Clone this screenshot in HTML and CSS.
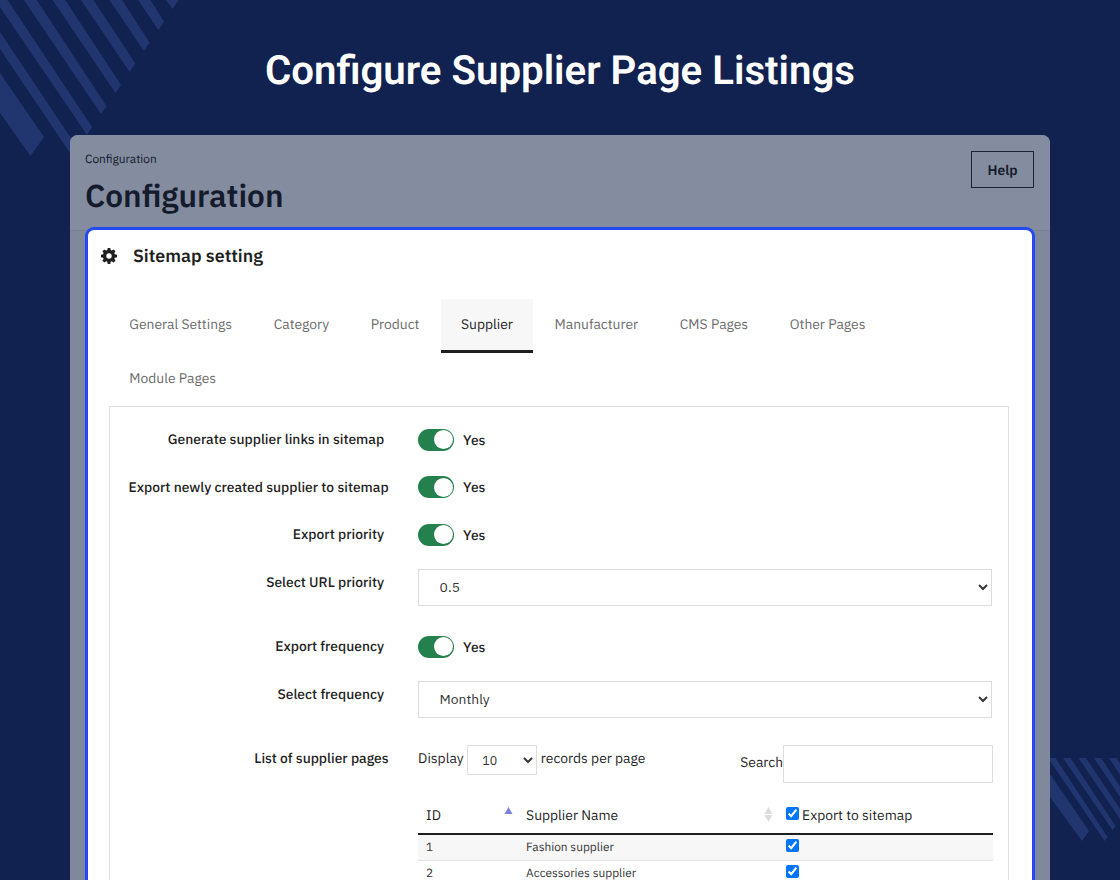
FILE: index.html
```html
<!DOCTYPE html>
<html lang="en">
<head>
<meta charset="utf-8">
<title>Configure Supplier Page Listings</title>
<link rel="stylesheet" href="styles.css">
</head>
<body>
<div class="stage">
    <svg class="stripes" width="1120" height="880" viewBox="0 0 1120 880">
        <!-- top left -->
        <path d="M0 73L44 137L30.5 156L0 113Z"/>
        <path d="M0 32L77 147L72 156L0 49Z"/>
        <path d="M0 0H7.5L92 127L87 135L0 7Z"/>
        <path d="M24 0H36.7L106.5 106L101 114Z"/>
        <path d="M52.5 0H65.3L121 85L115.5 93Z"/>
        <path d="M81 0H93.5L135.3 63.5L129.6 72Z"/>
        <path d="M109.5 0H122L149.6 42.5L144 51Z"/>
        <path d="M138 0H150.5L164 21.5L158.4 30Z"/>
        <path d="M166 0H178.7L172.6 9Z"/>
        <!-- bottom right -->
        <path d="M1050 774L1089 831L1082 841L1050 797Z"/>
        <path d="M1048 758H1055.5L1107.5 837L1104.7 841Z"/>
        <path d="M1063 758H1070.5L1115.5 826L1112.5 830Z"/>
        <path d="M1078.5 758H1086L1120 809V819Z"/>
        <path d="M1094 758H1101L1120 786.5V797Z"/>
        <path d="M1109 758H1116.5L1120 763.5V774.5Z"/>
    </svg>

    <h1 class="title">Configure Supplier Page Listings</h1>

    <div class="panel">
        <div class="panel_head">
            <div>
                <div class="crumb">Configuration</div>
                <h2 class="page_name">Configuration</h2>
            </div>
            <a class="help" href="javascript:;">Help</a>
        </div>

        <div class="card">
            <div class="card_head">
                <svg class="cog" width="16" height="16" viewBox="0 0 16 16">
                    <path fill-rule="evenodd" d="M6.7 0h2.6l.4 2.1 1.1.5L12.6 1.4 14.5 3.3 13.3 5.1l.5 1.2L16 6.7v2.6l-2.2.4-.5 1.1 1.2 1.9-1.9 1.8-1.8-1.2-1.1.5L9.3 16H6.7l-.4-2.2-1.2-.5-1.8 1.2-1.9-1.8 1.2-1.9-.5-1.1L0 9.3V6.7l2.1-.4.5-1.2L1.4 3.3 3.3 1.4l1.8 1.2 1.2-.5ZM8 5.3a2.7 2.7 0 1 0 0 5.4 2.7 2.7 0 0 0 0-5.4Z"/>
                </svg>
                <h3>Sitemap setting</h3>
            </div>

            <ul class="tabs">
                <li>General Settings</li>
                <li>Category</li>
                <li>Product</li>
                <li class="active">Supplier</li>
                <li>Manufacturer</li>
                <li>CMS Pages</li>
                <li>Other Pages</li>
                <li>Module Pages</li>
            </ul>

            <div class="tab_box">
                <div class="row">
                    <label class="name">Generate supplier links in sitemap</label>
                    <div class="switch"><i></i>Yes</div>
                </div>
                <div class="row">
                    <label class="name wide">Export newly created supplier to sitemap</label>
                    <div class="switch"><i></i>Yes</div>
                </div>
                <div class="row">
                    <label class="name">Export priority</label>
                    <div class="switch"><i></i>Yes</div>
                </div>
                <div class="row row_select">
                    <label class="name">Select URL priority</label>
                    <select class="field"><option>0.5</option></select>
                </div>
                <div class="row">
                    <label class="name">Export frequency</label>
                    <div class="switch"><i></i>Yes</div>
                </div>
                <div class="row row_select">
                    <label class="name">Select frequency</label>
                    <select class="field"><option>Monthly</option></select>
                </div>
                <div class="row">
                    <label class="name wide">List of supplier pages</label>
                    <div class="list">
                        <div class="list_bar">
                            <div class="display">
                                <span>Display</span>
                                <select class="count"><option>10</option></select>
                                <span>records per page</span>
                            </div>
                            <div class="search">Search<input type="text"></div>
                        </div>
                        <table>
                            <thead>
                                <tr>
                                    <th class="c_id"><div>ID<svg width="9" height="7" viewBox="0 0 9 7"><path fill="#8080e0" d="M4.5 0L8.5 7H.5Z"/></svg></div></th>
                                    <th class="c_name"><div>Supplier Name<svg class="both" width="9" height="15" viewBox="0 0 9 15"><path fill="#dcdcdc" d="M4.5 0L8.5 7H.5ZM.5 8H8.5L4.5 15Z"/></svg></div></th>
                                    <th class="c_check"><input type="checkbox" checked>Export to sitemap</th>
                                </tr>
                            </thead>
                            <tbody>
                                <tr><td>1</td><td>Fashion supplier</td><td class="c_check"><input type="checkbox" checked></td></tr>
                                <tr><td>2</td><td>Accessories supplier</td><td class="c_check"><input type="checkbox" checked></td></tr>
                            </tbody>
                        </table>
                    </div>
                </div>
            </div>
        </div>
    </div>
</div>
</body>
</html>
```
FILE: styles.css
```css
* { box-sizing: border-box; }
body { margin: 0; background: #112150; font: 13.85px/20px "IBM Plex Sans", Roboto, "Noto Sans", sans-serif; color: #1f1f1f; text-rendering: geometricPrecision; }
h1, h2, h3, ul { margin: 0; padding: 0; }
li { list-style: none; }

.stage { position: relative; width: 1120px; height: 880px; overflow: hidden; }
.stripes { position: absolute; left: 0; top: 0; fill: #21366f; }
.title { position: relative; height: 135px; padding-top: 47px; text-align: center; font: 600 40.2px/48px Roboto, sans-serif; color: #fff; }

.panel { position: relative; width: 980px; height: 760px; margin: 0 auto; border-radius: 8px 8px 0 0; background: #80889b; }
.panel_head { display: flex; justify-content: space-between; align-items: flex-start; height: 96px; padding: 16px 16px 0 15px; border-bottom: 1px solid #767e90; border-radius: 8px 8px 0 0; background: #848c9f; color: #141b2d; }
.crumb { font-size: 11.9px; line-height: 18px; }
.page_name { margin-top: 6px; font-size: 31.6px; line-height: 42px; font-weight: 600; }
.help { width: 63px; height: 37px; border: 1px solid #1b2336; line-height: 36px; text-align: center; font-weight: 600; color: #141b2d; text-decoration: none; }

.card { position: relative; width: 950.5px; height: 680px; margin: -4px 0 0 14.5px; padding: 0 22px; border: 3px solid #2249f2; border-radius: 9px; background: #fff; }
.card_head { display: flex; align-items: center; height: 52px; margin-left: -8.5px; gap: 16px; }
.card_head h3 { font-size: 17.8px; font-weight: 600; }
.cog { fill: #1f1f1f; }

.tabs { display: flex; flex-wrap: wrap; column-gap: 2px; width: 860px; margin-top: 17px; color: #6c6c6c; }
.tabs li { height: 53.5px; padding: 0 19.8px; line-height: 50.6px; }
.tabs .active { height: 54px; margin-bottom: -1px; background: #f7f7f7; border-bottom: 3px solid #1f1f1f; color: #1f1f1f; }

.tab_box { width: 900px; height: 600px; margin-left: -.4px; padding: 20px 16px 0 0; border: 1px solid #e0e0e0; }
.row { display: flex; height: 47.5px; }
.row_select { height: 64.5px; }
.name { width: 274px; margin-right: 34px; flex: none; line-height: 24px; text-align: right; white-space: nowrap; font-weight: 500; }
.name.wide { width: 278.5px; margin-right: 29.5px; }
.switch { display: flex; align-items: center; gap: 9px; height: 25.5px; font-weight: 500; }
.switch i { width: 36px; height: 22px; padding: 1.5px 1px; border-radius: 11px; background: #24804c; }
.switch i:after { content: ""; display: block; width: 19px; height: 19px; margin-left: auto; border-radius: 50%; background: #fff; }
.field { flex: 1; height: 37px; margin-top: -1px; padding: 0 0 0 16.5px; border: 1px solid #ddd; border-radius: 0; background: #fff; font: inherit; color: #363636; }

.list { flex: 1; margin-top: -1px; }
.list_bar { display: flex; justify-content: space-between; height: 54px; }
.display { display: flex; gap: 3.6px; height: 30px; line-height: 27px; }
.count { width: 70px; height: 30px; padding-left: 10px; border: 1px solid #ddd; border-radius: 0; background: #fff; font: 12.4px "IBM Plex Sans", sans-serif; color: #363636; }
.search { display: flex; height: 38px; line-height: 35px; }
.search input { width: 210px; height: 38px; border: 1px solid #ddd; }

table { width: 575px; border-collapse: separate; border-spacing: 0; table-layout: fixed; }
th, td { padding: 0 8px; text-align: left; font-weight: 400; white-space: nowrap; }
th { height: 36px; padding-bottom: 3px; border-bottom: 2px solid #1f1f1f; }
th div { display: flex; justify-content: space-between; align-items: center; margin-right: -3px; }
th svg { margin-bottom: 8px; }
th .both { margin-bottom: 0; }
.c_id { width: 100px; }
.c_name { width: 260px; }
td { height: 26px; border-bottom: 1px solid #e3e3e3; font-size: 11.9px; color: #363636; line-height: 25px; }
tbody tr:first-child td { background: #f7f7f7; }
input[type=checkbox] { width: 13px; height: 13px; margin: 0 3px 0 0; vertical-align: 0; }
td input[type=checkbox] { vertical-align: -.5px; }
```
